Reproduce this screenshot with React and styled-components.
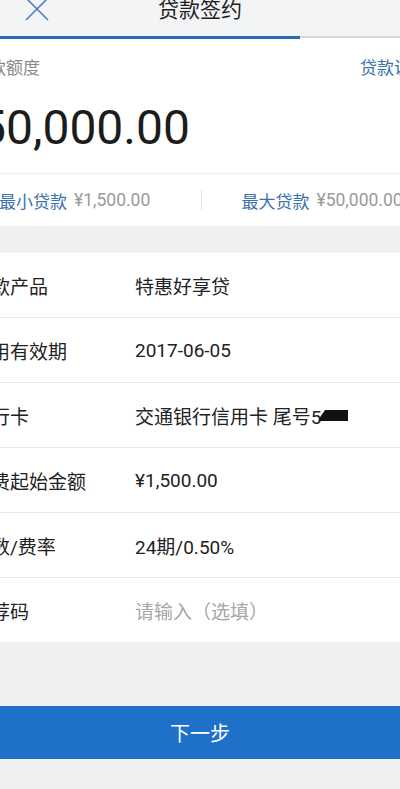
import React from 'react'
import styled, { createGlobalStyle } from 'styled-components'

const GlobalStyle = createGlobalStyle`
  html, body {
    margin: 0;
    padding: 0;
    background: #f0f0f0;
    overflow: hidden;
  }
  body {
    font-family: Roboto, "Noto Sans CJK SC", sans-serif;
    color: #222222;
  }
`

const rows = [
  { label: '贷款产品', value: '特惠好享贷' },
  { label: '信用有效期', value: '2017-06-05' },
  { label: '银行卡', value: '交通银行信用卡 尾号5', masked: true },
  { label: '收费起始金额', value: '¥1,500.00' },
  { label: '期数/费率', value: '24期/0.50%' },
  { label: '推荐码', value: '请输入（选填）', placeholder: true },
]

const CloseIcon = () => (
  <svg width="24" height="24" viewBox="0 0 24 24" fill="none">
    <path d="M1 1 L23 23 M23 1 L1 23" stroke="#4f7fc0" strokeWidth="1.6" />
  </svg>
)

export default function App() {
  return (
    <>
      <GlobalStyle />
      <Screen>
        <Header>
          <CloseButton>
            <CloseIcon />
          </CloseButton>
          <Title>贷款签约</Title>
          <span />
        </Header>
        <Progress>
          <ProgressDone />
          <ProgressRest />
        </Progress>

        <QuotaCard>
          <QuotaTop>
            <Muted>贷款额度</Muted>
            <LinkText>贷款说明</LinkText>
          </QuotaTop>
          <Amount>50,000.00</Amount>
          <Range>
            <RangeCell>
              <LinkText>最小贷款</LinkText>
              <RangeValue>¥1,500.00</RangeValue>
            </RangeCell>
            <RangeSep />
            <RangeCell>
              <LinkText>最大贷款</LinkText>
              <RangeValue>¥50,000.00</RangeValue>
            </RangeCell>
          </Range>
        </QuotaCard>

        <List>
          {rows.map((r) => (
            <Row key={r.label}>
              <Label>{r.label}</Label>
              <Value $placeholder={r.placeholder}>
                {r.value}
                {r.masked && <Mask />}
              </Value>
            </Row>
          ))}
        </List>

        <Footer>
          <NextButton>下一步</NextButton>
        </Footer>
      </Screen>
    </>
  )
}

const Screen = styled.div`
  width: 486px;
  margin: -21px 0 0 -43px;
  background: #f0f0f0;
`

const Header = styled.div`
  height: 57px;
  display: grid;
  grid-template-columns: 1fr auto 1fr;
  align-items: center;
  background: #f3f4f6;
`

const CloseButton = styled.div`
  display: flex;
  padding-left: 68px;
  padding-top: 2px;
`

const Title = styled.div`
  font-size: 21px;
  color: #1e1e1e;
  padding-top: 1px;
`

const Progress = styled.div`
  display: flex;
  align-items: flex-start;
  height: 3px;
  background: #ffffff;
`

const ProgressDone = styled.div`
  width: 343px;
  height: 3px;
  background: #2a6cb8;
`

const ProgressRest = styled.div`
  flex: 1;
  height: 2px;
  background: #d4d6d9;
`

const QuotaCard = styled.div`
  background: #ffffff;
  margin-bottom: 27px;
`

const QuotaTop = styled.div`
  display: flex;
  justify-content: space-between;
  align-items: center;
  padding: 17px 15px 0 15px;
  line-height: 24px;
  font-size: 17px;
`

const Muted = styled.span`
  color: #8a8a8a;
`

const LinkText = styled.span`
  color: #3a72aa;
  font-size: 17px;
`

const Amount = styled.div`
  font-size: 48px;
  line-height: 56px;
  padding: 20px 0 17px 22px;
  color: #1c1c1c;
`

const Range = styled.div`
  display: flex;
  align-items: center;
  height: 52px;
  border-top: 1px solid #ececec;
`

const RangeCell = styled.div`
  flex: 1;
  display: flex;
  align-items: center;
  gap: 7px;
  padding-left: 42px;
  white-space: nowrap;

  &:last-child {
    padding-left: 40px;
  }
`

const RangeValue = styled.span`
  color: #9a9a9a;
  font-size: 17.5px;
`

const RangeSep = styled.div`
  width: 1px;
  height: 20px;
  background: #e2e2e2;
`

const List = styled.div`
  background: #ffffff;
`

const Row = styled.div`
  display: flex;
  align-items: center;
  height: 64px;
  padding-left: 15px;
  border-bottom: 1px solid #e8e8e8;
  font-size: 19px;

  &:last-child {
    border-bottom: none;
  }
`

const Label = styled.div`
  width: 163px;
  color: #222222;
  white-space: nowrap;
`

const Value = styled.div`
  display: flex;
  align-items: center;
  color: ${(p) => (p.$placeholder ? '#a6a6a6' : '#222222')};
  white-space: nowrap;
`

const Mask = styled.span`
  display: inline-block;
  width: 30px;
  height: 11px;
  margin-left: -3px;
  margin-top: 1px;
  background: #111111;
  clip-path: polygon(22% 0, 100% 0, 100% 100%, 0 100%, 8% 55%);
`

const Footer = styled.div`
  padding: 64px 0 31px 0;
  background: #f0f0f0;
`

const NextButton = styled.div`
  height: 53px;
  display: flex;
  align-items: center;
  justify-content: center;
  background: #1f70c8;
  color: #ffffff;
  font-size: 20px;
`
